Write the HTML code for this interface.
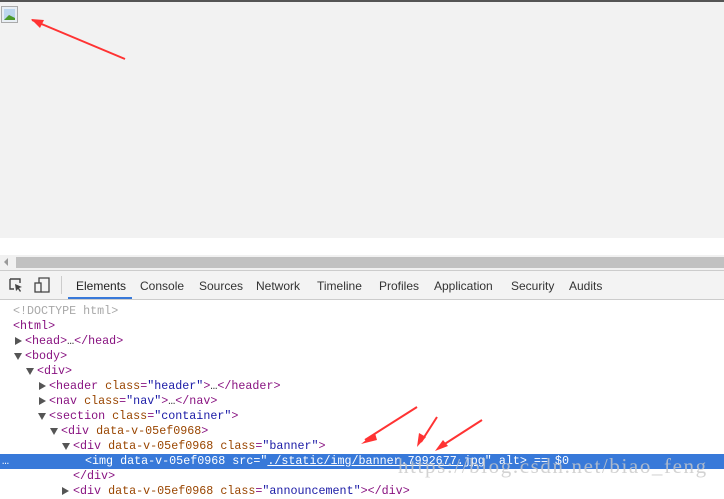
<!DOCTYPE html>
<html><head><style>
body{margin:0;width:724px;height:488px;overflow:hidden;background:#fff;font-family:"Liberation Sans",sans-serif;position:relative}
.top{position:absolute;left:0;top:0;width:724px;height:2px;background:#555}
.page{position:absolute;left:0;top:2px;width:724px;height:236px;background:#f2f2f2}
.sb{position:absolute;left:0;top:255px;width:724px;height:15px;background:#f1f1f1;border-bottom:1px solid #ccc}
.sb .th{position:absolute;left:16px;top:2px;right:0;height:11px;background:#c1c1c1}
.tb{position:absolute;left:0;top:271px;width:724px;height:28px;background:#f3f3f3;border-bottom:1px solid #ccc}
.tab{position:absolute;top:8px;font-size:12px;color:#333}
.code{position:absolute;left:0;top:304px;width:724px;font-family:"Liberation Mono",monospace;font-size:11.7px;line-height:15px;color:#881280}
.l{position:relative;height:15px;white-space:pre}
.a{color:#994500}.v{color:#1a1aa6}.g{color:#a8a8a8}
.r,.d{position:absolute;width:0;height:0}
.r{top:3px;border-top:4px solid transparent;border-bottom:4px solid transparent;border-left:7px solid #555}
.d{top:4px;border-left:4px solid transparent;border-right:4px solid transparent;border-top:7px solid #555}
.sel{background:#3879d9;color:#fff}
</style></head><body>
<div class="top"></div>
<div class="page">
<svg style="position:absolute;left:1px;top:4px" width="17" height="17"><rect x="0.5" y="0.5" width="16" height="16" fill="#e8eef4" stroke="#aaa"/><rect x="3" y="3" width="11" height="11" fill="#bcd6ee"/><path d="M3 14 L8 9 L14 12 L14 14Z" fill="#4a9a2a"/></svg>
<svg style="position:absolute;left:28px;top:12px" width="100" height="50"><path d="M4 6 L97 45" stroke="#f33" stroke-width="2"/><path d="M3 5 L16 6 L12 14Z" fill="#f33"/></svg>
</div>
<div class="sb"><div style="position:absolute;left:4px;top:3px;width:0;height:0;border-top:4px solid transparent;border-bottom:4px solid transparent;border-right:4px solid #999"></div><div class="th"></div></div>
<div class="tb">
<svg style="position:absolute;left:9px;top:7px" width="14" height="14"><path d="M1 1h10v4M1 1v10h4" stroke="#444" fill="none" stroke-width="1.4"/><path d="M6 6l7 3-3 1 2 3-1 1-2-3-2 2z" fill="#444"/></svg>
<svg style="position:absolute;left:34px;top:6px" width="16" height="16"><rect x="1" y="6" width="6" height="9" stroke="#444" fill="none" stroke-width="1.3"/><path d="M5 6V1h10v14H7" stroke="#444" fill="none" stroke-width="1.3"/></svg>
<div style="position:absolute;left:61px;top:5px;width:1px;height:18px;background:#ccc"></div>
<div class="tab" style="left:76px;color:#222">Elements</div>
<div style="position:absolute;left:68px;top:26px;width:64px;height:2px;background:#3879d9"></div>
<div class="tab" style="left:140px">Console</div>
<div class="tab" style="left:199px">Sources</div>
<div class="tab" style="left:256px">Network</div>
<div class="tab" style="left:317px">Timeline</div>
<div class="tab" style="left:379px">Profiles</div>
<div class="tab" style="left:434px">Application</div>
<div class="tab" style="left:511px">Security</div>
<div class="tab" style="left:569px">Audits</div>
</div>
<div class="code">
<div class="l" style="padding-left:13px"><span class="g">&lt;!DOCTYPE html&gt;</span></div>
<div class="l" style="padding-left:13px">&lt;html&gt;</div>
<div class="l" style="padding-left:25px"><span class="r" style="left:15px"></span>&lt;head&gt;<span style="color:#333">…</span>&lt;/head&gt;</div>
<div class="l" style="padding-left:25px"><span class="d" style="left:14px"></span>&lt;body&gt;</div>
<div class="l" style="padding-left:37px"><span class="d" style="left:26px"></span>&lt;div&gt;</div>
<div class="l" style="padding-left:49px"><span class="r" style="left:39px"></span>&lt;header <span class="a">class</span>=<span class="v">"header"</span>&gt;<span style="color:#333">…</span>&lt;/header&gt;</div>
<div class="l" style="padding-left:49px"><span class="r" style="left:39px"></span>&lt;nav <span class="a">class</span>=<span class="v">"nav"</span>&gt;<span style="color:#333">…</span>&lt;/nav&gt;</div>
<div class="l" style="padding-left:49px"><span class="d" style="left:38px"></span>&lt;section <span class="a">class</span>=<span class="v">"container"</span>&gt;</div>
<div class="l" style="padding-left:61px"><span class="d" style="left:50px"></span>&lt;div <span class="a">data-v-05ef0968</span>&gt;</div>
<div class="l" style="padding-left:73px"><span class="d" style="left:62px"></span>&lt;div <span class="a">data-v-05ef0968</span> <span class="a">class</span>=<span class="v">"banner"</span>&gt;</div>
<div class="l sel" style="padding-left:85px"><span style="position:absolute;left:2px">…</span>&lt;img data-v-05ef0968 src="<u>./static/img/banner.7992677.jpg</u>" alt&gt; == $0</div>
<div class="l" style="padding-left:73px">&lt;/div&gt;</div>
<div class="l" style="padding-left:73px"><span class="r" style="left:62px"></span>&lt;div <span class="a">data-v-05ef0968</span> <span class="a">class</span>=<span class="v">"announcement"</span>&gt;&lt;/div&gt;</div>
</div>
<div style="position:absolute;left:398px;top:454px;font-family:'Liberation Serif',serif;font-size:21px;color:rgba(200,200,200,0.8);letter-spacing:1.6px">https://blog.csdn.net/biao_feng</div>
<svg style="position:absolute;left:355px;top:400px" width="140" height="60"><g stroke="#f33" stroke-width="2"><path d="M62 7L10 40M82 17L66 42M127 20L85 47"/></g><g fill="#f33"><path d="M6 44L20 33L22 40Z"/><path d="M62 47L64 33L71 37Z"/><path d="M80 51L88 40L93 46Z"/></g></svg>
</body></html>
